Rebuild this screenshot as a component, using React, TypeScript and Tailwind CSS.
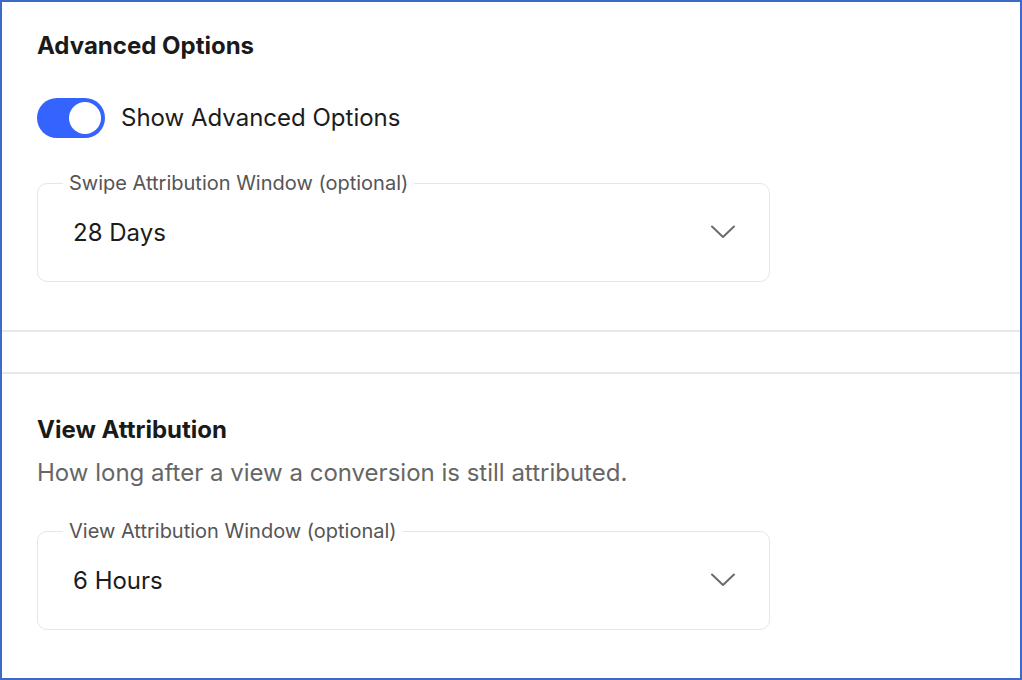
import React from "react";

function Chevron() {
  return (
    <svg width="26" height="16" viewBox="0 0 26 16" fill="none" className="shrink-0 mt-[-3px]">
      <path d="M2 2.5 L13 13 L24 2.5" stroke="#6b6b6b" strokeWidth="2" strokeLinecap="round" strokeLinejoin="round" />
    </svg>
  );
}

function SelectField({ label, value }: { label: string; value: string }) {
  return (
    <fieldset className="w-[733px] h-[111px] border border-[#e6e6e6] rounded-[10px] pl-[26px] pr-[33px] m-0">
      <legend className="px-[6px] text-[20px] leading-[24px] text-[#555555] ml-[-1px]">{label}</legend>
      <div className="flex items-center justify-between h-[76px] pl-[9px]">
        <span className="text-[24px] leading-[32px] text-[#1c1c1c]">{value}</span>
        <Chevron />
      </div>
    </fieldset>
  );
}

export default function App() {
  return (
    <div
      className="w-[1022px] h-[680px] border-2 border-[#3a6bc9] bg-white overflow-hidden flex flex-col"
      style={{ fontFamily: "Inter, 'Noto Sans', sans-serif" }}
    >
      <section className="px-[35px] pt-[28px] h-[330px] border-b-2 border-[#e8e8e8] shrink-0">
        <h2 className="text-[24px] font-bold leading-[32px] text-[#1a1a1a]">Advanced Options</h2>
        <div className="flex items-center mt-[36px] gap-[16px]">
          <div className="w-[68px] h-[40px] rounded-full bg-[#3464fd] flex items-center justify-end pr-[4px]">
            <div className="w-[32px] h-[32px] rounded-full bg-white" />
          </div>
          <span className="text-[24px] leading-[32px] text-[#1c1c1c]">Show Advanced Options</span>
        </div>
        <div className="mt-[33px]">
          <SelectField label="Swipe Attribution Window (optional)" value="28 Days" />
        </div>
      </section>
      <div className="h-[40px] shrink-0" />
      <section className="px-[35px] pt-[40px] border-t-2 border-[#e8e8e8] flex-1">
        <h2 className="text-[24px] font-bold leading-[32px] text-[#1a1a1a]">View Attribution</h2>
        <p className="text-[24px] text-[#666666] mt-[11px] leading-[32px]">How long after a view a conversion is still attributed.</p>
        <div className="mt-[30px]">
          <SelectField label="View Attribution Window (optional)" value="6 Hours" />
        </div>
      </section>
    </div>
  );
}
